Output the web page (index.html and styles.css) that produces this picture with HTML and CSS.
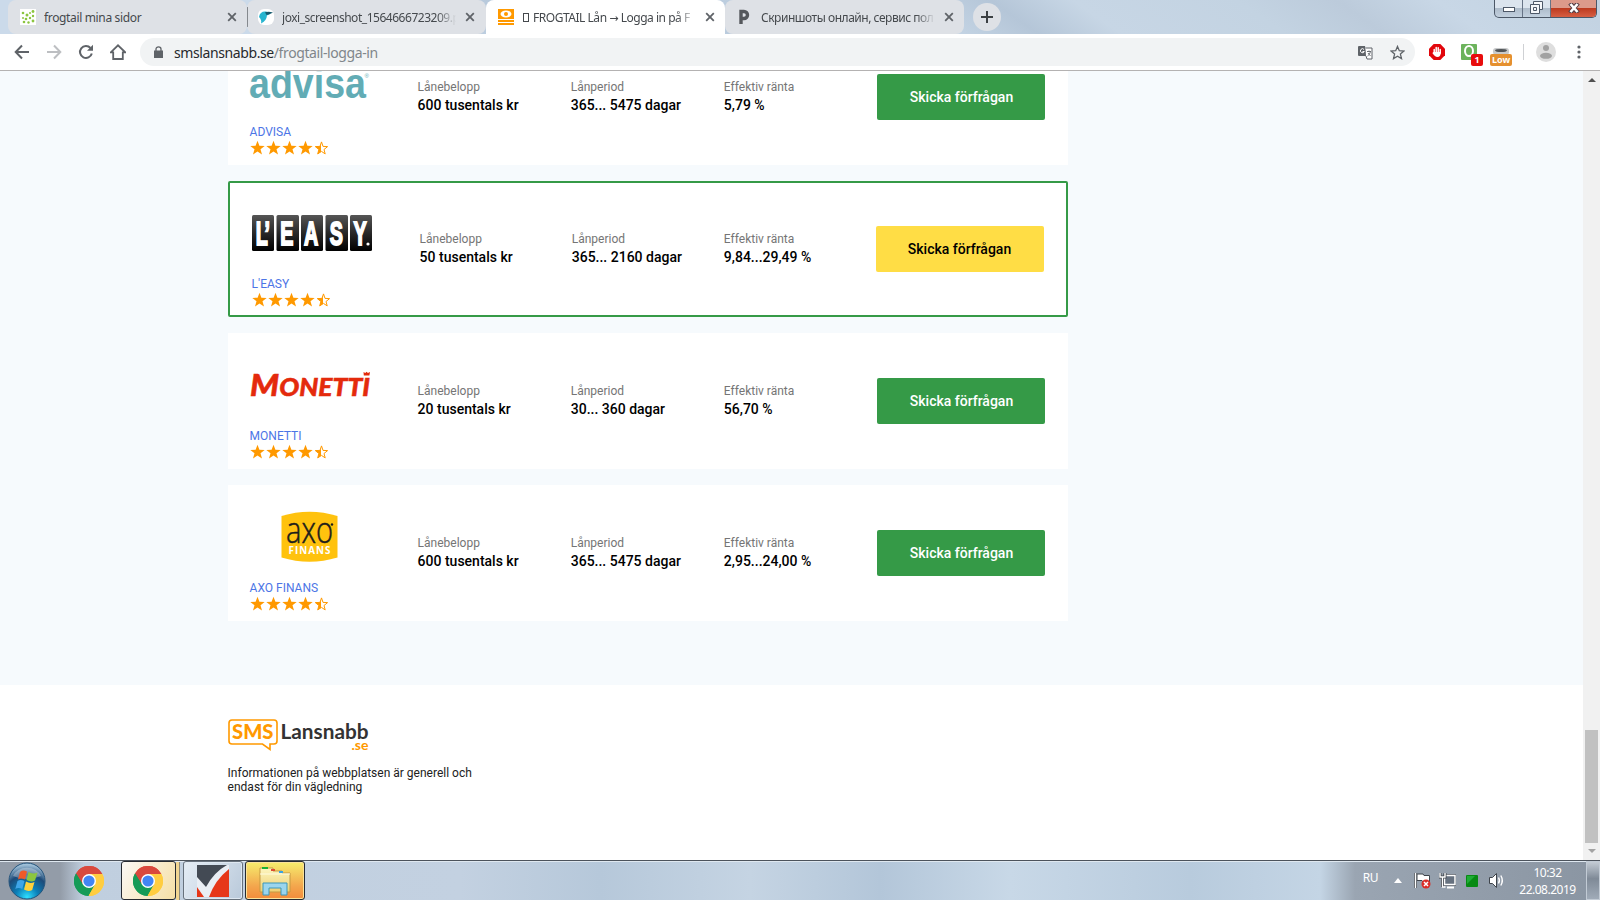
FILE: index.html
```html
<!DOCTYPE html>
<html lang="sv">
<head>
<meta charset="utf-8">
<title>FROGTAIL Lån → Logga in</title>
<link rel="stylesheet" href="styles.css">
</head>
<body>
<svg class="defs" width="0" height="0">
  <defs>
    <linearGradient id="half"><stop offset=".5" stop-color="#f90"/><stop offset=".5" stop-color="#fff"/></linearGradient>
    <linearGradient id="dark" x2="0" y2="1"><stop offset="0" stop-color="#555"/><stop offset=".5" stop-color="#282828"/><stop offset="1" stop-color="#000"/></linearGradient>
    <radialGradient id="orb" cx=".5" cy=".95" r=".9"><stop offset="0" stop-color="#2fe0ff"/><stop offset=".35" stop-color="#0b7fb8"/><stop offset=".7" stop-color="#1d4a78"/><stop offset="1" stop-color="#9fc0d8"/></radialGradient>
    <linearGradient id="folder" x2="0" y2="1"><stop offset="0" stop-color="#fdf6c0"/><stop offset="1" stop-color="#eecf72"/></linearGradient>
    <symbol id="close" viewBox="0 0 10 10"><path d="M1.2 1.2l7.6 7.6M8.8 1.2l-7.6 7.6" stroke="#5f6368" stroke-width="1.8"/></symbol>
    <symbol id="stars" viewBox="0 0 80 16">
      <g fill="#f90">
        <path id="st" d="M7.500.8l1.900 5 5.300.1-4.200 3.300 1.500 5.200-4.500-3-4.500 3 1.500-5.200L.3 5.900l5.300-.1z"/>
        <use href="#st" x="16"/><use href="#st" x="32"/><use href="#st" x="48"/>
      </g>
      <path d="M71.500 1.900l1.500 4.500 4.600.2-3.600 2.900 1.200 4.400-3.700-2.500-3.800 2.500 1.200-4.400-3.600-2.900 4.700-.2z" fill="url(#half)" stroke="#f90"/>
    </symbol>
    <symbol id="chrome" viewBox="0 0 30 30">
      <path d="M15 15L2 7.500A15 15 0 0 1 28 7.500z" fill="#db4437"/>
      <path d="M15 15L15 30A15 15 0 0 1 2 7.500z" fill="#0f9d58"/>
      <path d="M15 15L28 7.500A15 15 0 0 1 15 30z" fill="#ffcd40"/>
      <path d="M15 8h13.300l-.3-.5A15 15 0 0 0 2 7.500L8.900 18.500z" fill="#d9493d"/>
      <path d="M8.900 18.500L2 7.500A15 15 0 0 0 14.500 30l6.600-11.500z" fill="#169b57"/>
      <path d="M15 8h13.300A15 15 0 0 1 14.500 30l6.600-11.500z" fill="#ffcd40"/>
      <circle cx="15" cy="15" r="7" fill="#fff"/><circle cx="15" cy="15" r="5.600" fill="#4285f4"/>
    </symbol>
  </defs>
</svg>

<header class="strip">
  <div class="tab">
    <svg class="fav" viewBox="0 0 16 16"><path fill="#fff" d="M0 0h16v16H0z"/><g fill="#8bc53f"><circle cx="3" cy="4" r="1.300"/><circle cx="7" cy="6" r="1.500"/><circle cx="13" cy="2.500" r="1.400"/><circle cx="10" cy="4" r="1"/><circle cx="13" cy="7" r="1.200"/><circle cx="3" cy="9" r="1"/><circle cx="6" cy="10" r="1.300"/><circle cx="10" cy="9" r="1.200"/><circle cx="4" cy="13" r="1.300"/><circle cx="8.500" cy="13.500" r="1.200"/><circle cx="13" cy="12" r="1.400"/></g></svg>
    <span class="title first">frogtail mina sidor</span><svg class="x"><use href="#close"/></svg>
  </div>
  <div class="tab second">
    <svg class="fav" viewBox="0 0 16 16"><rect width="16" height="16" rx="6" fill="#fff"/><path d="M1 8Q2 2 8 2.500q3 .2 3.500 2.500L9 6.500Q8.500 12 3 14.500q1-3.500-2-6.500z" fill="#27b5d0"/><path d="M7 3.200q4-.8 8 .3L11 5.500 8.500 6z" fill="#155a6e"/></svg>
    <span class="title fade">joxi_screenshot_1564666723209.p</span><svg class="x"><use href="#close"/></svg>
  </div>
  <div class="tab active">
    <svg class="fav" viewBox="0 0 16 16"><path fill="#f90" d="M0 0h16v10H0zM0 11h16v2H0zM0 14h16v2H0z"/><ellipse cx="8" cy="5" rx="5.500" ry="3.500" fill="#fff"/><circle cx="8" cy="5" r="2" fill="#f90"/></svg>
    <span class="title fade"><i class="tofu"></i>FROGTAIL Lån <i class="arrow">→</i> Logga in på F</span><svg class="x"><use href="#close"/></svg>
  </div>
  <div class="tab">
    <svg class="fav" viewBox="0 0 16 16"><path d="M4 15V2.500h3a3 3 0 0 1 0 7H4" fill="none" stroke="#55585c" stroke-width="3.400"/></svg>
    <span class="title fade">Скриншоты онлайн, сервис пол</span><svg class="x"><use href="#close"/></svg>
  </div>
  <div class="plus"><svg width="12" height="12" viewBox="0 0 12 12"><path d="M6 0v12M0 6h12" stroke="#3c4043" stroke-width="2"/></svg></div>
  <div class="win">
    <span><svg width="12" height="5"><rect x=".5" y=".5" width="11" height="4" fill="#fff" stroke="#4d5868"/></svg></span>
    <span><svg width="13" height="13" viewBox="0 0 13 13" fill="#f5f7fa" stroke="#4d5868"><path d="M3.500.5h9v8h-9z"/><path d="M.5 3.500h9v9h-9z"/><path d="M3.500 6.500h3v3h-3z"/></svg></span>
    <span class="red"><svg width="12" height="10" viewBox="0 0 12 10"><path d="M2 0l8 10M10 0L2 10" stroke="#574047" stroke-width="4.500"/><path d="M2.500 1l7 8M9.500 1l-7 8" stroke="#fff" stroke-width="2.600"/></svg></span>
  </div>
</header>

<nav class="bar">
  <div class="nav">
    <svg viewBox="0 0 16 16"><path d="M15 8H2M8 1.500L1.700 8 8 14.500" fill="none" stroke="#5f6368" stroke-width="2"/></svg>
    <svg viewBox="0 0 16 16"><path d="M1 8h13M8 1.500L14.300 8 8 14.500" fill="none" stroke="#bdbfc2" stroke-width="2"/></svg>
    <svg viewBox="0 0 16 16"><path d="M13.800 9.500A6 6 0 1 1 12.500 4" fill="none" stroke="#5f6368" stroke-width="2"/><path d="M15 .8v6H9z" fill="#5f6368"/></svg>
    <svg viewBox="0 0 16 16"><path d="M.8 8.300L8 1.300l7.200 7H12.800V15H3.200V8.300z" fill="none" stroke="#5f6368" stroke-width="1.800"/></svg>
  </div>
  <div class="omni">
    <svg width="9" height="12" viewBox="0 0 9 12"><path d="M0 4.500h9V12H0z" fill="#5f6368"/><path d="M2 5V3a2.500 2.200 0 0 1 5 0v2" fill="none" stroke="#5f6368" stroke-width="1.300"/></svg>
    <span class="url">smslansnabb.se<em>/frogtail-logga-in</em></span>
    <svg width="15" height="15" viewBox="0 0 15 15"><path d="M1 1h6l2 10H1a1 1 0 0 1-1-1V2a1 1 0 0 1 1-1z" fill="#5f6368"/><path d="M7.500 3H14v11H9l-1-3" fill="#fff" stroke="#5f6368"/><path d="M6 4.500a2 2 0 1 0 .3 2H4.500" stroke="#fff" fill="none"/><path d="M9 6.500h4M11 5.500v1M12.500 6.500q-.5 3-3 4.500M10 8l2.500 3" stroke="#5f6368" fill="none" stroke-width=".9"/></svg>
    <svg class="bm" width="15" height="15" viewBox="0 0 15 15"><path d="M7.500 1.400l1.800 4.300 4.600.4-3.500 3 1.100 4.500-4-2.400-4 2.400 1.100-4.500-3.500-3 4.600-.4z" fill="none" stroke="#5f6368" stroke-width="1.300"/></svg>
  </div>
  <div class="ext">
    <svg width="16" height="16" viewBox="0 0 16 16"><path d="M4.700 0h6.600L16 4.700v6.600L11.300 16H4.700L0 11.300V4.700z" fill="#e2060c"/><path d="M5.200 9V5.500M7.200 8V3.500M9.200 8V3.800M11.200 9V5.500" stroke="#fff" stroke-width="1.500" stroke-linecap="round"/><path d="M4.500 8h7.400q0 5-3.500 5-2.500 0-5-4z" fill="#fff"/></svg>
    <div class="e2"><svg width="16" height="16"><rect width="16" height="16" rx="1" fill="#6cb35c"/><ellipse cx="8" cy="7" rx="4" ry="5" fill="none" stroke="#fff" stroke-width="2"/></svg><b>1</b></div>
    <div class="e3"><svg width="16" height="9"><rect y="2" width="16" height="7" rx="3" fill="#c8cacb"/><ellipse cx="8" cy="4.500" rx="6" ry="1.600" fill="#505458"/></svg><b>Low</b></div>
    <i class="sep"></i>
    <svg width="20" height="20" viewBox="0 0 20 20"><circle cx="10" cy="10" r="10" fill="#dedede"/><circle cx="10" cy="6" r="3" fill="#a2a2a2"/><ellipse cx="10" cy="13.800" rx="6" ry="3" fill="#a2a2a2"/></svg>
    <svg width="4" height="14" viewBox="0 0 4 14" fill="#5f6368"><circle cx="2" cy="2" r="1.600"/><circle cx="2" cy="7" r="1.600"/><circle cx="2" cy="12" r="1.600"/></svg>
  </div>
</nav>

<div class="view">
  <div class="page">
    <main class="list">
      <article class="card">
        <div class="brand">
          <svg class="logo" viewBox="0 0 120 60"><text x="-1" y="46.500" font-family="Liberation Sans" font-weight="700" font-size="43" textLength="117" lengthAdjust="spacingAndGlyphs" fill="#62acb5">advisa</text><text x="114.500" y="27" font-family="Liberation Sans" font-size="6" fill="#62acb5">®</text></svg>
          <a>ADVISA</a><svg class="stars"><use href="#stars"/></svg>
        </div>
        <div class="fact"><small>Lånebelopp</small><b>600 tusentals kr</b></div>
        <div class="fact"><small>Lånperiod</small><b>365... 5475 dagar</b></div>
        <div class="fact"><small>Effektiv ränta</small><b>5,79 %</b></div>
        <div class="btn">Skicka förfrågan</div>
      </article>
      <article class="card featured">
        <div class="brand">
          <svg class="logo" viewBox="0 0 120 60"><g fill="url(#dark)"><rect y="12" width="22" height="36" rx="1.500"/><rect x="24.500" y="12" width="22.500" height="36" rx="1.500"/><rect x="49" y="12" width="22" height="36" rx="1.500"/><rect x="73.500" y="12" width="22.500" height="36" rx="1.500"/><rect x="98" y="12" width="22" height="36" rx="1.500"/></g><text transform="scale(.58 1)" x="6.500 21.500 48.500 89.500 134 175" y="42.500" font-family="Liberation Sans" font-weight="700" font-size="34" fill="#fff" stroke="#fff" stroke-width="2">L’EASY</text><circle cx="116" cy="41" r="1.600" fill="#fff"/></svg>
          <a>L'EASY</a><svg class="stars"><use href="#stars"/></svg>
        </div>
        <div class="fact"><small>Lånebelopp</small><b>50 tusentals kr</b></div>
        <div class="fact"><small>Lånperiod</small><b>365... 2160 dagar</b></div>
        <div class="fact"><small>Effektiv ränta</small><b>9,84...29,49 %</b></div>
        <div class="btn">Skicka förfrågan</div>
      </article>
      <article class="card">
        <div class="brand">
          <svg class="logo" viewBox="0 0 120 60"><text y="41" font-family="Lato" font-weight="900" font-style="italic" fill="#e42a0c" stroke="#e42a0c" stroke-width=".5" font-size="25" textLength="120" lengthAdjust="spacingAndGlyphs"><tspan font-size="31">M</tspan>ONETTI</text><path d="M113.500 17l1.800 1 1.300-1.200 1.300 1.200 2.100-1-.6 3.500h-5.600z" fill="#e42a0c"/></svg>
          <a>MONETTI</a><svg class="stars"><use href="#stars"/></svg>
        </div>
        <div class="fact"><small>Lånebelopp</small><b>20 tusentals kr</b></div>
        <div class="fact"><small>Lånperiod</small><b>30... 360 dagar</b></div>
        <div class="fact"><small>Effektiv ränta</small><b>56,70 %</b></div>
        <div class="btn">Skicka förfrågan</div>
      </article>
      <article class="card">
        <div class="brand">
          <svg class="logo" viewBox="0 0 120 60"><path d="M31.500 9Q59.500.5 87.500 9V50.500Q59.500 59 31.500 50.500z" fill="#ffc20e"/><text x="36" y="35.700" font-family="Open Sans" font-weight="300" font-size="37" textLength="47" lengthAdjust="spacingAndGlyphs" fill="#1d1d1b" stroke="#1d1d1b" stroke-width=".5">axo</text><circle cx="82" cy="17.500" r="1.200" fill="#1d1d1b"/><text x="38.500" y="47" font-family="Open Sans" font-weight="700" font-size="9.800" textLength="42" lengthAdjust="spacing" fill="#fff">FINANS</text></svg>
          <a>AXO FINANS</a><svg class="stars"><use href="#stars"/></svg>
        </div>
        <div class="fact"><small>Lånebelopp</small><b>600 tusentals kr</b></div>
        <div class="fact"><small>Lånperiod</small><b>365... 5475 dagar</b></div>
        <div class="fact"><small>Effektiv ränta</small><b>2,95...24,00 %</b></div>
        <div class="btn">Skicka förfrågan</div>
      </article>
    </main>
    <footer class="foot">
      <svg width="142" height="34" viewBox="0 0 142 34"><path d="M4 1h42q3 0 3 3v18q0 3-3 3h-4v5.500L34.500 25H4q-3 0-3-3V4q0-3 3-3z" fill="none" stroke="#f90" stroke-width="1.600"/><text x="4" y="20" font-family="Lato" font-weight="900" font-size="21" textLength="41.500" lengthAdjust="spacingAndGlyphs" fill="#f90">SMS</text><text x="52.500" y="20" font-family="Lato" font-weight="700" font-size="20.500" textLength="88" lengthAdjust="spacingAndGlyphs" fill="#333">Lansnabb</text><text x="123.500" y="31" font-family="Lato" font-weight="700" font-size="13" textLength="17" lengthAdjust="spacingAndGlyphs" fill="#f90">.se</text></svg>
      <p>Informationen på webbplatsen är generell och<br>endast för din vägledning</p>
    </footer>
  </div>
  <div class="scroll">
    <svg width="8" height="4"><path d="M4 0l4 4H0z" fill="#505050"/></svg>
    <i class="thumb"></i>
    <svg width="8" height="4"><path d="M0 0h8L4 4z" fill="#a3a3a3"/></svg>
  </div>
</div>

<div class="task">
  <svg class="orb" width="38" height="38" viewBox="0 0 38 38"><circle cx="19" cy="19" r="18" fill="url(#orb)" stroke="#24547c"/><path d="M5 14a15 13 0 0 1 28 0q-14 6-28 0z" fill="#fff" opacity=".3"/><path d="M12 10q3-2.500 7-.5l-2 8q-4-2-7 0z" fill="#ef5a28"/><path d="M20.500 10q4 2.500 9 .5l-2.500 8q-4 2-8.500-.5z" fill="#8cc63f"/><path d="M9.500 19q3-2 7 0l-2.200 8q-4-2-7 0z" fill="#3fa5e8"/><path d="M18 19.500q4 2.500 8.500.5l-2.300 8q-4 2-8.200-.5z" fill="#ffd13b"/></svg>
  <svg class="chrome" width="30" height="30"><use href="#chrome"/></svg>
  <div class="tbtn on"><svg width="30" height="30"><use href="#chrome"/></svg></div><i class="stack"></i>
  <div class="tbtn mid"><svg width="32" height="32" viewBox="0 0 32 32"><path d="M0 0h32v32H0z" fill="#e9eef4"/><path d="M0 0h30Q17 7 9 22L0 12z" fill="#434a54"/><path d="M32 4v28H12Q18 15 32 4z" fill="#e63719"/><path d="M0 22l7 10H0z" fill="#e63719"/></svg></div>
  <div class="tbtn files"><svg width="34" height="30" viewBox="0 0 34 30"><path d="M2 4V2h13v3h9v2h8v19H2z" fill="url(#folder)" stroke="#c59a42"/><path d="M4 1h6v2H4z" fill="#18b233"/><path d="M13 3h4v2h-4z" fill="#de4b31"/><path d="M21 5h4v2h-4z" fill="#3aa3e2"/><path d="M2 8h30" stroke="#fffbe0"/><path d="M5 17h24v12h-6v-7H11v7H5z" fill="#9bd5ee" stroke="#3c97bb"/></svg></div>
  <div class="tray">
    <span class="lang">RU</span>
    <svg class="up" width="8" height="5"><path d="M4 0l4 5H0z" fill="#fff"/></svg>
    <svg class="ic" viewBox="0 0 17 17"><path d="M1.500 1v15" stroke="#3f444b" stroke-width="3"/><path d="M3 2h6l1 1.500h5.500V10H9L8 8.500H3z" fill="#fff" stroke="#3f444b"/><path d="M1.500 1v15" stroke="#fff" stroke-width="1.500"/><circle cx="12" cy="12" r="4.500" fill="#da2c27"/><path d="M10 10l4 4m0-4l-4 4" stroke="#fff" stroke-width="1.500"/></svg>
    <svg class="ic" viewBox="0 0 17 17"><path d="M5.500 3.500h11v9h-11z" fill="#66717f" stroke="#3f444b" stroke-width="2.500"/><path d="M5.500 3.500h10.500v9h-10.500z" fill="#66717f" stroke="#fff" stroke-width="1.500"/><path d="M8 15.500h7" stroke="#fff" stroke-width="2"/><path d="M1 1v4h5V1M3.500 5v10" fill="none" stroke="#3f444b" stroke-width="3"/><path d="M1 1v4h5V1M3.500 5v10h3" fill="none" stroke="#fff" stroke-width="1.400"/></svg>
    <svg class="gr" width="12" height="12"><rect width="12" height="12" rx="1" fill="#078a13"/><path d="M1 1h8L1 9z" fill="#1fad35"/></svg>
    <svg class="ic" viewBox="0 0 17 17"><path d="M1.500 5.500h3l4-4v14l-4-4h-3z" fill="#fff" stroke="#3f444b"/><path d="M10.500 5.500q1.800 3 0 6M12.800 3.500q3 5 0 10" fill="none" stroke="#fff" stroke-width="1.400"/></svg>
    <div class="clock"><span>10:32</span><span>22.08.2019</span></div>
    <i class="show"></i>
  </div>
</div>
</body>
</html>
```

FILE: styles.css
```css
* { box-sizing: border-box; }
body { margin: 0; width: 1600px; height: 900px; overflow: hidden; display: flex; flex-direction: column; font-family: Roboto, "Liberation Sans", sans-serif; background: #fff; }
svg { display: block; flex: none; }
.defs { position: absolute; }
i { font-style: normal; }

.strip { height: 34px; flex: none; display: flex; padding-left: 8px; background: linear-gradient(35deg, #cbdaea 0 20%, #b4c6d9 35%, #c4d4e4 58%, #b5c6d8 63%, #c7d6e5 68%, #c3d3e2 78%, #bccbdb 84%, #c8d7e6 90%, #c2d2e1); }
.tab { width: 239px; height: 34px; display: flex; align-items: center; padding: 0 10px 0 12px; background: #dee1e6; border-radius: 8px; font: 12px "Noto Sans", sans-serif; color: #45494d; }
.tab.second { padding-left: 11px; background: linear-gradient(#85898e, #85898e) 0 50% / 1px 20px no-repeat #dee1e6; }
.tab.active { background: #fff; border-radius: 8px 8px 0 0; }
.fav { width: 16px; height: 16px; margin-right: 8px; }
.title { width: 176px; margin-right: 7px; white-space: nowrap; overflow: hidden; letter-spacing: -.47px; }
.first { letter-spacing: -.35px; }
.fade { -webkit-mask-image: linear-gradient(90deg, #000 88%, transparent 99%); mask-image: linear-gradient(90deg, #000 88%, transparent 99%); }
.tofu { display: inline-block; width: 6px; height: 9px; border: 1px solid #45494d; margin: 0 4px 0 1px; }
.arrow { font-family: "DejaVu Sans"; font-size: 11px; }
.x { width: 10px; height: 10px; }
.plus { width: 28px; height: 28px; margin: 3px 0 0 9px; border-radius: 50%; background: #dee1e6; display: grid; place-items: center; }
.win { margin: 0 3px 0 auto; height: 18px; width: 103px; display: flex; border: 1px solid #4b5767; border-top: 0; border-radius: 0 0 5px 5px; overflow: hidden; background: linear-gradient(#dbe4ee 50%, #aebccb 50%, #c3d1df); }
.win span { width: 28px; display: grid; place-items: center; padding-bottom: 2px; border-right: 1px solid #667386; }
.win .red { flex: 1; border: 0; background: linear-gradient(#dc9a8b 45%, #bd3b20 50%, #d75f43); }
.win span:first-child { padding-top: 4px; }

.bar { height: 37px; flex: none; display: flex; align-items: center; background: #fff; border-bottom: 1px solid #b4b2b2; }
.nav { width: 140px; display: flex; gap: 16px; padding-left: 14px; }
.nav svg { width: 16px; height: 16px; }
.omni { width: 1275px; height: 28px; border-radius: 14px; background: #f1f3f4; display: flex; align-items: center; padding: 0 10px 0 14px; }
.url { margin: 0 auto 0 11px; font: 14px "Noto Sans", sans-serif; letter-spacing: -.4px; color: #27292c; }
.url em { font-style: normal; color: #80868b; }
.bm { margin-left: 17px; }
.ext { flex: 1; display: flex; align-items: center; padding-left: 14px; }
.e2 { position: relative; margin-left: 16px; }
.e2 b, .e3 b { position: absolute; color: #fff; text-align: center; font: 700 9px/12px "Noto Sans", sans-serif; border-radius: 2px; }
.e2 b { left: 10px; top: 10px; width: 12px; height: 12px; background: #e80c0c; }
.e3 { position: relative; margin-left: 16px; height: 16px; padding-top: 2px; }
.e3 b { left: -3px; top: 10px; width: 22px; height: 12px; background: #e5902f; }
.sep { width: 1px; height: 16px; background: #cfd1d4; margin: 0 12px 0 14px; }
.ext > svg:last-child { margin-left: 21px; }

.view { height: 789px; flex: none; display: flex; }
.page { width: 1583px; background: #f6fafd; display: flex; flex-direction: column; overflow: hidden; }
.list { height: 614px; padding: 0 0 64px 228px; display: flex; flex-direction: column; justify-content: flex-end; gap: 16px; flex: none; }
.card { width: 840px; height: 136px; flex: none; background: #fff; padding: 0 23px 0 22px; display: grid; grid-template-columns: 167.600px 1fr 1fr 1fr 168px; align-items: center; }
.featured { border: 2px solid #359a47; border-radius: 2px; padding-right: 22px; }
.brand { align-self: start; display: flex; flex-direction: column; padding-top: 22px; }
.featured .brand { padding-top: 20px; }
.logo { width: 120px; height: 60px; overflow: visible; }
.brand a { font-size: 12px; line-height: 16px; margin: 13px 0 0 -.4px; color: #4c75e6; }
.stars { width: 80px; height: 16px; }
.fact { display: flex; flex-direction: column; padding-bottom: 1px; }
.fact small { font-size: 12px; line-height: 18px; color: #757575; }
.fact b { font-size: 14px; line-height: 19px; font-weight: 500; color: #000; }
.btn { height: 46px; line-height: 47px; border-radius: 2px; background: #359a47; color: #fff; text-align: center; font-weight: 500; font-size: 14px; padding-left: 1px; }
.featured .btn { background: #ffdd45; color: #000; padding: 0 1px 0 0; }
.foot { flex: 1; background: #fff; padding: 34px 0 0 227.600px; }
.foot p { margin: 13px 0 0; font-size: 12px; line-height: 14px; color: #212121; }
.scroll { width: 17px; background: #f1f1f1; display: flex; flex-direction: column; align-items: center; padding: 7px 0; }
.thumb { width: 13px; height: 113px; background: #c1c1c1; margin: auto 0 6px; }

.task { height: 40px; flex: none; border-top: 1px solid #4c535c; box-shadow: inset 0 1px #dfe8f0; display: flex; align-items: center; background: linear-gradient(90deg, #939ca8 0 60px, #c0cfdf 84px, #c3d1e1 460px, #b6c8da 600px, #c5d4e3 750px, #b3c6d9 880px, #c8d8e7 1010px, #b8cbdd 1190px, #c4d5e5 1320px, #9aa5b2 1355px, #8e99a6 1540px, #8a95a2); }
.orb { margin: 0 0 0 8px; }
.chrome { margin: 0 17px 0 28px; }
.tbtn { height: 39px; display: grid; place-items: center; border: 1px solid #252a31; border-radius: 3px; }
.on { width: 55px; padding-right: 2px; background: linear-gradient(120deg, #faf8f5, #f5dfa5); }
.stack { width: 4px; height: 38px; margin-right: 3px; background: #f0d591; border-right: 1px solid #8d8b7c; }
.mid { width: 60px; margin-right: 2px; border-color: #67717c; background: linear-gradient(120deg, #e5edf5, #b9c9da); box-shadow: inset 0 0 0 1px #dfe8f1; }
.files { width: 60px; background: linear-gradient(#f6ee6d, #f3a64d 65%, #f38c3b); box-shadow: inset 0 0 0 1px #fbe29a; }
.tray { margin-left: auto; display: flex; align-items: center; height: 39px; color: #fff; font: 12px "Noto Sans", sans-serif; letter-spacing: -.5px; }
.lang { margin: 0 16px 6px 0; }
.ic { width: 17px; height: 17px; }
.up { margin-right: 12px; }
.gr { margin: 0 10px; }
.ic + .ic { margin-left: 8px; }
.clock { width: 81px; display: flex; flex-direction: column; text-align: center; line-height: 17px; padding-left: 4px; }
.show { width: 14px; height: 39px; border: 1px solid #c2cbd5; background: linear-gradient(#c3cbd4, #7f8a97 45%, #a0abb8); }
```
